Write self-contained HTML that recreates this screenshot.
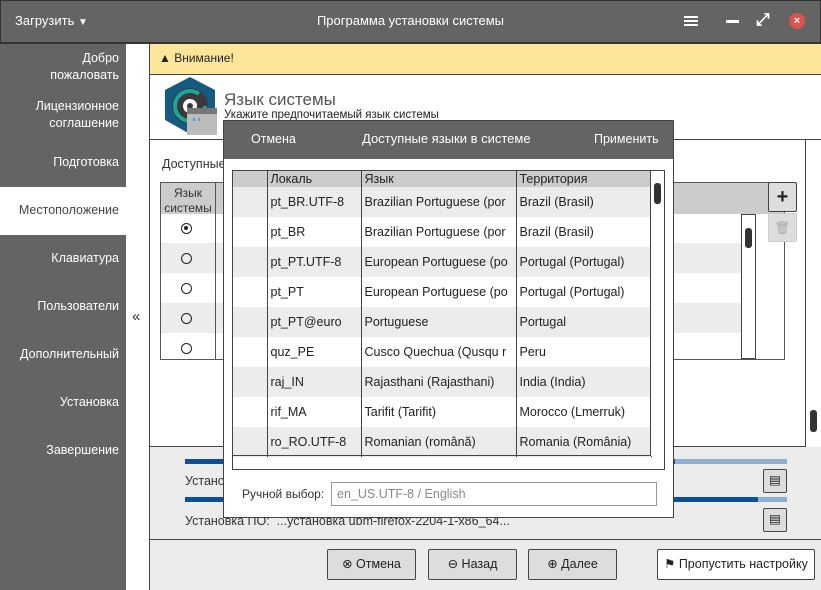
<!DOCTYPE html>
<html><head><meta charset="utf-8"><style>
*{box-sizing:border-box;margin:0;padding:0}
body{width:821px;height:590px;position:relative;overflow:hidden;font-family:"Liberation Sans","DejaVu Sans",sans-serif;font-size:12px;color:#333;background:#ececec}
.a{position:absolute}
.w{color:#fff}
.side div{position:absolute;right:7px;text-align:right;color:#fff;font-size:12.5px;line-height:17px}
table{border-collapse:collapse}
.dt td{height:30px;padding-left:3px;border-right:1px solid #444;white-space:nowrap;overflow:hidden;font-size:12.5px;color:#222}
.btn{position:absolute;background:#ddd;border:1px solid #444;border-radius:2px;text-align:center;line-height:28px;font-size:12.5px;color:#222}
.r{position:absolute;left:181px;width:11px;height:11px;border:1.5px solid #222;border-radius:50%}
</style></head><body>
<!-- title -->
<div class="a" style="left:0;top:0;width:821px;height:44px;background:#646464;border:1px solid #333;border-bottom:2px solid #333"></div>
<div class="a w" style="left:15px;top:13px;font-size:13px">Загрузить <span style="font-size:10px">▼</span></div>
<div class="a w" style="left:0;width:821px;top:13px;text-align:center;font-size:13px">Программа установки системы</div>
<div class="a" style="left:684px;top:16px;width:14px;height:2px;background:#fff;box-shadow:0 4px #fff,0 8px #fff"></div>
<div class="a" style="left:726px;top:20px;width:13px;height:3px;background:#fff"></div>
<div class="a w" style="left:756px;top:10px;font-size:17px;font-weight:bold">⤢</div>
<div class="a" style="left:789px;top:13px;width:16px;height:16px;border-radius:50%;background:#d9534f;color:#fff;font-size:11px;line-height:16px;text-align:center;font-weight:bold">×</div>
<!-- sidebar -->
<div class="a side" style="left:0;top:44px;width:126px;height:546px;background:#646464">
<div style="top:6px">Добро<br>пожаловать</div>
<div style="top:54px">Лицензионное<br>соглашение</div>
<div style="top:110px">Подготовка</div>
<div style="top:143px;left:0;right:0;height:48px;background:#fff"></div>
<div style="top:158px;color:#444">Местоположение</div>
<div style="top:206px">Клавиатура</div>
<div style="top:254px">Пользователи</div>
<div style="top:302px">Дополнительный</div>
<div style="top:350px">Установка</div>
<div style="top:398px">Завершение</div>
</div>
<div class="a" style="left:126px;top:44px;width:24px;height:546px;background:#fff;border-right:1px solid #444"></div>
<div class="a" style="left:132px;top:308px;font-size:15px">«</div>
<!-- warning -->
<div class="a" style="left:150px;top:44px;width:671px;height:31px;background:#fde59a;border-bottom:1px solid #444"></div>
<div class="a" style="left:159px;top:51px;font-size:12px;color:#222">▲ Внимание!</div>
<!-- header -->
<div class="a" style="left:150px;top:75px;width:671px;height:65px;background:#fff;border-bottom:1px solid #444"></div>
<svg class="a" style="left:163px;top:76px" width="58" height="60"><polygon points="27,1 52,14 52,44 27,58 2,44 2,14" fill="#155a80"/><circle cx="27" cy="30" r="18" fill="#3a3a3a"/><circle cx="27" cy="30" r="15" fill="none" stroke="#1aa79a" stroke-width="4" stroke-dasharray="80 15"/><circle cx="27" cy="30" r="7" fill="#fff"/><circle cx="27" cy="30" r="3" fill="#3a3a3a"/><rect x="24" y="32" width="30" height="27" fill="#bbb"/><rect x="24" y="32" width="30" height="6" fill="#777"/><rect x="30" y="42" width="2" height="3" fill="#4aa3e8"/><rect x="35" y="42" width="2" height="3" fill="#4aa3e8"/></svg>
<div class="a" style="left:224px;top:90px;font-size:17px;color:#555">Язык системы</div>
<div class="a" style="left:224px;top:109px;font-size:11.5px;color:#222">Укажите предпочитаемый язык системы</div>
<!-- content -->
<div class="a" style="left:150px;top:140px;width:671px;height:307px;background:#fff;border-bottom:1px solid #444"></div>
<div class="a" style="left:805px;top:140px;width:16px;height:307px;border-left:1px solid #444;background:#fff"></div>
<div class="a" style="left:810px;top:410px;width:7px;height:22px;background:#333;border-radius:3px"></div>
<div class="a" style="left:162px;top:157px;font-size:12.5px">Доступные</div>
<div class="a" style="left:160px;top:182px;width:625px;height:178px;border:1px solid #555;background:#fff"></div>
<div class="a" style="left:161px;top:183px;width:623px;height:31px;background:#ccc"></div>
<div class="a" style="left:161px;top:243px;width:580px;height:30px;background:#ececec"></div>
<div class="a" style="left:161px;top:303px;width:580px;height:30px;background:#ececec"></div>
<div class="a" style="left:215px;top:183px;width:1px;height:176px;background:#555"></div>
<div class="a" style="left:162px;top:186px;width:52px;text-align:center;font-size:12px;line-height:15px">Язык<br>системы</div>
<div class="r" style="top:223px"><div style="margin:2px;width:4px;height:4px;border-radius:50%;background:#222"></div></div>
<div class="r" style="top:253px"></div>
<div class="r" style="top:283px"></div>
<div class="r" style="top:313px"></div>
<div class="r" style="top:343px"></div>
<div class="a" style="left:741px;top:214px;width:15px;height:145px;border:1px solid #444;background:#fff"></div>
<div class="a" style="left:745px;top:228px;width:7px;height:20px;background:#333;border-radius:3px"></div>
<div class="btn" style="left:768px;top:182px;width:29px;height:30px;font-size:20px;font-weight:bold;line-height:28px">+</div>
<div class="btn" style="left:768px;top:213px;width:29px;height:29px;border-color:#ccc;color:#aaa">🗑</div>
<!-- progress -->
<div class="a" style="left:185px;top:459px;width:602px;height:5px;background:#8fb1d1"></div>
<div class="a" style="left:185px;top:459px;width:490px;height:5px;background:#0c5195"></div>
<div class="a" style="left:185px;top:497px;width:602px;height:5px;background:#8fb1d1"></div>
<div class="a" style="left:185px;top:497px;width:573px;height:5px;background:#0c5195"></div>
<div class="a" style="left:185px;top:474px;font-size:12.5px">Установка</div>
<div class="a" style="left:185px;top:514px;font-size:12.5px">Установка ПО: &nbsp;...установка ubm-firefox-2204-1-x86_64...</div>
<div class="btn" style="left:763px;top:469px;width:24px;height:24px;line-height:20px">▤</div>
<div class="btn" style="left:763px;top:508px;width:24px;height:24px;line-height:20px">▤</div>
<div class="a" style="left:150px;top:539px;width:671px;height:1px;background:#444"></div>
<div class="btn" style="left:327px;top:549px;width:89px;height:31px">⊗ Отмена</div>
<div class="btn" style="left:428px;top:549px;width:89px;height:31px">⊖ Назад</div>
<div class="btn" style="left:528px;top:549px;width:89px;height:31px">⊕ Далее</div>
<div class="btn" style="left:657px;top:549px;width:158px;height:31px;background:#fff">⚑ Пропустить настройку</div>
<!-- dialog -->
<div class="a" style="left:223px;top:120px;width:451px;height:398px;background:#fff;border:1px solid #444"></div>
<div class="a" style="left:224px;top:121px;width:449px;height:38px;background:#646464"></div>
<div class="a w" style="left:251px;top:132px;font-size:12.5px">Отмена</div>
<div class="a w" style="left:362px;top:131px;font-size:13px">Доступные языки в системе</div>
<div class="a w" style="left:594px;top:132px;font-size:12.5px">Применить</div>
<div class="a" style="left:232px;top:170px;width:433px;height:300px;border:1px solid #444;background:#fff;overflow:hidden">
<table class="dt" style="width:418px;table-layout:fixed">
<colgroup><col style="width:34px"><col style="width:94px"><col style="width:155px"><col style="width:135px"></colgroup>
<tr style="background:#ccc"><td style="height:16px"></td><td style="height:16px">Локаль</td><td style="height:16px">Язык</td><td style="height:16px">Территория</td></tr>
<tr style="background:#ececec"><td></td><td>pt_BR.UTF-8</td><td>Brazilian Portuguese (por</td><td>Brazil (Brasil)</td></tr>
<tr><td></td><td>pt_BR</td><td>Brazilian Portuguese (por</td><td>Brazil (Brasil)</td></tr>
<tr style="background:#ececec"><td></td><td>pt_PT.UTF-8</td><td>European Portuguese (po</td><td>Portugal (Portugal)</td></tr>
<tr><td></td><td>pt_PT</td><td>European Portuguese (po</td><td>Portugal (Portugal)</td></tr>
<tr style="background:#ececec"><td></td><td>pt_PT@euro</td><td>Portuguese</td><td>Portugal</td></tr>
<tr><td></td><td>quz_PE</td><td>Cusco Quechua (Qusqu r</td><td>Peru</td></tr>
<tr style="background:#ececec"><td></td><td>raj_IN</td><td>Rajasthani (Rajasthani)</td><td>India (India)</td></tr>
<tr><td></td><td>rif_MA</td><td>Tarifit (Tarifit)</td><td>Morocco (Lmerruk)</td></tr>
<tr style="background:#ececec"><td></td><td>ro_RO.UTF-8</td><td>Romanian (română)</td><td>Romania (România)</td></tr>
</table>
<div class="a" style="left:0;top:284px;width:431px;height:1px;background:#444"></div>
<div class="a" style="left:417px;top:0;width:15px;height:285px;border-left:1px solid #444;background:#fff"></div>
<div class="a" style="left:421px;top:12px;width:7px;height:21px;background:#333;border-radius:3px"></div>
</div>
<div class="a" style="left:242px;top:487px;font-size:12px">Ручной выбор:</div>
<div class="a" style="left:331px;top:482px;width:326px;height:24px;border:1px solid #999;padding-left:5px;line-height:22px;color:#888;font-size:12.5px">en_US.UTF-8 / English</div>
</body></html>
